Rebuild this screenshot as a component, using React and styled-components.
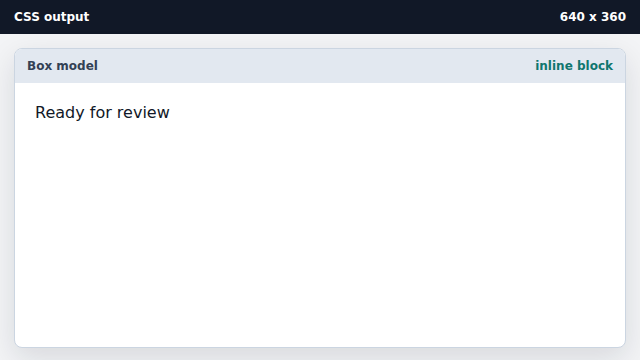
import React from "react";
import styled, { createGlobalStyle } from "styled-components";

const GlobalStyle = createGlobalStyle`
  html, body {
    margin: 0;
    padding: 0;
    background: #f3f4f6;
    font-family: "DejaVu Sans", "Liberation Sans", sans-serif;
  }
`;

const Page = styled.div`
  width: 640px;
  height: 360px;
  display: flex;
  flex-direction: column;
  background: #f3f4f6;
`;

const TopBar = styled.div`
  height: 34px;
  flex-shrink: 0;
  display: flex;
  align-items: center;
  justify-content: space-between;
  padding: 0 14px;
  background: #111827;
  color: #ffffff;
  font-size: 12px;
  font-weight: bold;
`;

const Stage = styled.div`
  flex: 1;
  display: flex;
  padding: 14px 14px 12px;
  min-height: 0;
`;

const Card = styled.div`
  flex: 1;
  display: flex;
  flex-direction: column;
  background: #ffffff;
  border: 1px solid #cbd5e1;
  border-radius: 8px;
  overflow: hidden;
  box-shadow: 0 10px 30px rgba(15, 23, 42, 0.12);
`;

const CardHeader = styled.div`
  height: 34px;
  flex-shrink: 0;
  display: flex;
  align-items: center;
  justify-content: space-between;
  padding: 0 12px;
  background: #e2e8f0;
  font-size: 12px;
  font-weight: bold;
  color: #334155;
`;

const Tag = styled.span`
  color: #0f766e;
`;

const CardBody = styled.div`
  flex: 1;
  padding: 20px 20px;
  font-size: 16px;
  color: #111827;
`;

export default function App() {
  return (
    <>
      <GlobalStyle />
      <Page>
        <TopBar>
          <span>CSS output</span>
          <span>640 x 360</span>
        </TopBar>
        <Stage>
          <Card>
            <CardHeader>
              <span>Box model</span>
              <Tag>inline block</Tag>
            </CardHeader>
            <CardBody>Ready for review</CardBody>
          </Card>
        </Stage>
      </Page>
    </>
  );
}
